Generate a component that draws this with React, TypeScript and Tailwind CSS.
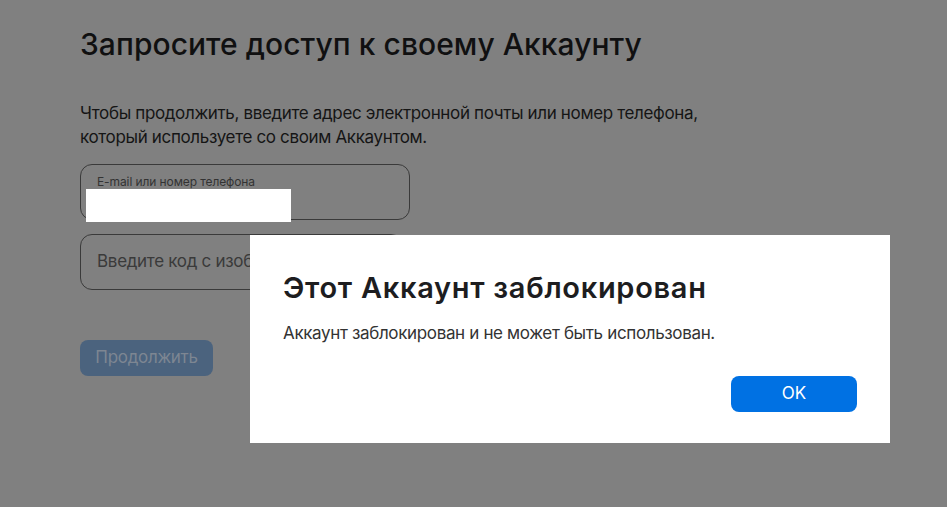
import React from "react";

export default function App() {
  return (
    <div className="relative w-[947px] h-[507px] overflow-hidden bg-[#808080]" style={{ fontFamily: "Inter, 'Noto Sans', sans-serif" }}>
      <div className="pl-[80px] pt-[27px] text-[#101011]">
        <h1 className="text-[30px] leading-[34px] font-medium tracking-[0.05px]">Запросите доступ к своему Аккаунту</h1>
        <p className="mt-[40px] text-[17px] leading-[24px] w-[660px] text-[#151515] tracking-[-0.35px]">
          Чтобы продолжить, введите адрес электронной почты или номер телефона, который используете со своим Аккаунтом.
        </p>
        <div className="mt-[15px] relative w-[330px] h-[56px] rounded-[12px] border border-[#3a3a3a]">
          <div className="pl-[16px] pt-[9px] text-[12px] leading-[16px] text-[#333] tracking-[-0.1px]">E-mail или номер телефона</div>
          <div className="absolute left-[5px] top-[24px] w-[205px] h-[33px] bg-white" />
        </div>
        <div className="mt-[14px] flex items-start">
          <div className="w-[323px] h-[56px] rounded-[12px] border border-[#3a3a3a] flex items-center pl-[16px] text-[17px] text-[#3a3a3a] tracking-[-0.3px]">
            Введите код с изображения
          </div>
          <div className="ml-[27px] mt-[1px] w-[123px] h-[1px] bg-[#5a5a5a]" />
        </div>
        <button className="mt-[50px] w-[133px] h-[36px] rounded-[8px] bg-[#4b637e] text-[17px] text-[#7d8692] tracking-[-0.3px]">Продолжить</button>
      </div>
      <div className="absolute left-[250px] top-[235px] w-[640px] h-[208px] bg-white px-[33px] pt-[37px]">
        <h2 className="text-[29px] leading-[32px] font-semibold text-[#1d1d1f] tracking-[0.7px]">Этот Аккаунт заблокирован</h2>
        <p className="mt-[17px] text-[17px] leading-[24px] text-[#333] tracking-[-0.35px]">Аккаунт заблокирован и не может быть использован.</p>
        <div className="mt-[31px] flex justify-end">
          <button className="w-[126px] h-[36px] rounded-[8px] bg-[#0071e3] text-white text-[17px]">OK</button>
        </div>
      </div>
    </div>
  );
}
